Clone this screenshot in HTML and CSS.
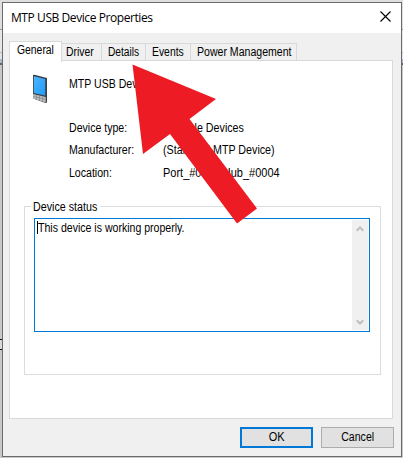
FILE: index.html
```html
<!DOCTYPE html>
<html lang="en">
<head>
<meta charset="utf-8">
<title>MTP USB Device Properties</title>
<link rel="stylesheet" href="styles.css">
</head>
<body>
<div class="desktop">
<div class="window">
  <header class="titlebar">
    <h1 class="title">MTP USB Device Properties</h1>
    <svg class="close" width="11" height="11" viewBox="0 0 11 11"><path d="M.5.5l10 10M10.500.5l-10 10"/></svg>
  </header>
  <nav class="tabs">
    <span class="tab active"><span class="label tight">General</span></span>
    <span class="tab driver"><span class="label tight">Driver</span></span>
    <span class="tab details"><span class="label tighter">Details</span></span>
    <span class="tab events"><span class="label tight">Events</span></span>
    <span class="tab power"><span class="label">Power Management</span></span>
  </nav>
  <main class="panel">
    <div class="device">
      <svg class="device-icon" width="16" height="29" viewBox="0 0 16 29">
        <defs><linearGradient id="screen" x1="0" y1="0" x2="1" y2="1"><stop offset="0" stop-color="#4fb4fc"/><stop offset="1" stop-color="#1e9bfa"/></linearGradient></defs>
        <path d="M0 0L1.500-.3 14 3v24.500l-1.500.5L0 23.500z" fill="#3b4045"/>
        <path d="M.8 1.200l11.400 2.900V20.500L.8 18z" fill="url(#screen)"/>
        <path d="M0 19l12.700 3v5.500L0 23.500z" fill="#b9bbbd"/>
        <path d="M0 21.200l12.500 3.300M3.500 20v4.500M6.500 21v4.500M9.500 22v4.500" stroke="#7b7f82" stroke-width=".6"/>
      </svg>
      <span class="device-name label">MTP USB Device</span>
    </div>
    <dl class="facts">
      <dt><span class="label">Device type:</span></dt><dd><span class="label wide">Portable Devices</span></dd>
      <dt><span class="label">Manufacturer:</span></dt><dd><span class="label wide">(Standard MTP Device)</span></dd>
      <dt><span class="label">Location:</span></dt><dd><span class="label wider">Port_#0001.Hub_#0004</span></dd>
    </dl>
    <section class="group">
      <h2 class="legend"><span class="label wide">Device status</span></h2>
      <div class="status">
        <p class="status-text"><i class="caret"></i><span class="label">This device is working properly.</span></p>
        <div class="scrollbar">
          <svg width="8" height="6" viewBox="0 0 8 6"><path d="M.7 4.800L4 1.500l3.300 3.300"/></svg>
          <svg width="8" height="6" viewBox="0 0 8 6"><path d="M.7 1.200L4 4.500l3.300-3.300"/></svg>
        </div>
      </div>
    </section>
  </main>
  <footer class="actions">
    <button class="btn primary"><span class="label wider">OK</span></button>
    <button class="btn"><span class="label">Cancel</span></button>
  </footer>
</div>
<svg class="arrow" width="403" height="458" viewBox="0 0 403 458"><path d="M132.500 64.500L216 99l-26.500 20L257 208.500 237 223.500 170 134l-27 20z"/></svg>
</div>
</body>
</html>
```
FILE: styles.css
```css
* { box-sizing: border-box; }
body { margin: 0; font: 12px/16px "Liberation Sans", sans-serif; color: #000; }
.desktop { position: relative; width: 403px; height: 458px; padding: 2px 1px 1px 2px; overflow: hidden;
  background: linear-gradient(#dedede 0 29px, #999 29px 30px, #e6e6e6 30px 52px, #bbb 52px 53px, #dfe3e9 53px 59px, #a9bccf 59px 63px, #666 63px 65px, #c8c8c8 65px 100%); }
.desktop::before { content: ""; position: absolute; left: 0; top: 339px; width: 2px; height: 9px; border: solid #111; border-width: 1px 0; background: #d8d8d8; }
.window { width: 400px; height: 455px; border: 1px solid #6b6b6b; background: #f0f0f0; display: flex; flex-direction: column; }
.label { display: inline-block; transform: scaleX(.88); transform-origin: 0 50%; white-space: nowrap; }
.tight { transform: scaleX(.865); }
.tighter { transform: scaleX(.85); }
.wide { transform: scaleX(.892); }
.wider { transform: scaleX(.915); }
.titlebar { height: 30px; flex: none; background: #fff; display: flex; justify-content: space-between; align-items: flex-start; padding: 7px 12px 0 8px; }
.title { margin: 0; font: 12px/15px "Open Sans", sans-serif; white-space: nowrap; color: #000; letter-spacing: -.42px; }
.close { margin: 1px -2px 0 0; fill: none; stroke: #000; stroke-width: 1.1; }
.tabs { height: 28px; flex: none; padding: 7px 0 0 6px; display: flex; align-items: flex-end; position: relative; z-index: 1; }
.tab { height: 18px; border: 1px solid #d9d9d9; border-width: 1px 1px 0 0; padding: 0 0 0 4px; white-space: nowrap; }
.tab.active { width: 53px; height: 21px; border-left-width: 1px; background: #fff; margin-bottom: -1px; padding: 0 0 0 7px; position: relative; }
.driver { width: 40px; }
.details { width: 44px; padding-left: 6px; }
.events { width: 45px; padding-left: 6px; }
.power { width: 106px; padding-left: 6px; }
.panel { width: 384px; height: 359px; flex: none; margin: -1px 0 0 6px; border: 1px solid #d9d9d9; background: #fff; padding: 13px 11px 0 14px; }
.device { height: 36px; display: flex; }
.device-icon { margin: 1px 0 0 9px; overflow: visible; }
.device-name { margin: 2px 0 0 20px; }
.facts { margin: 9px 0 0 45px; display: grid; grid-template-columns: 93px 1fr; grid-template-rows: 22px 23px 23px; white-space: nowrap; line-height: 18px; }
.facts dd { margin: 0; padding-left: .6px; }
.group { margin-top: 19px; width: 357px; height: 169px; border: 1px solid #dcdcdc; padding: 0 0 0 9px; }
.legend { margin: -8px 0 0 -3px; padding: 0 2px; width: 69px; font: inherit; background: #fff; white-space: nowrap; }
.status { margin-top: 3px; width: 336px; height: 114px; border: 1px solid #0078d7; display: flex; justify-content: space-between; padding: 1px; }
.status-text { margin: 0; padding-left: 1px; display: flex; white-space: nowrap; }
.caret { width: 1px; height: 13px; margin-top: 1px; background: #000; }
.scrollbar { width: 16px; background: #f0f0f0; display: flex; flex-direction: column; align-items: center; justify-content: space-between; padding: 6px 0 5px; }
.scrollbar svg { fill: none; stroke: #bfbfbf; stroke-width: 2; }
.actions { display: flex; justify-content: flex-end; gap: 8px; padding: 8px 7px 0 0; }
.btn { width: 73px; height: 21px; padding: 0; border: 1px solid #adadad; background: #e1e1e1; font: inherit; line-height: 17px; color: #000; }
.btn .label { transform-origin: 50% 50%; }
.primary { border: 2px solid #0078d7; }
.arrow { position: absolute; left: 0; top: 0; fill: #ed1c24; }
```
